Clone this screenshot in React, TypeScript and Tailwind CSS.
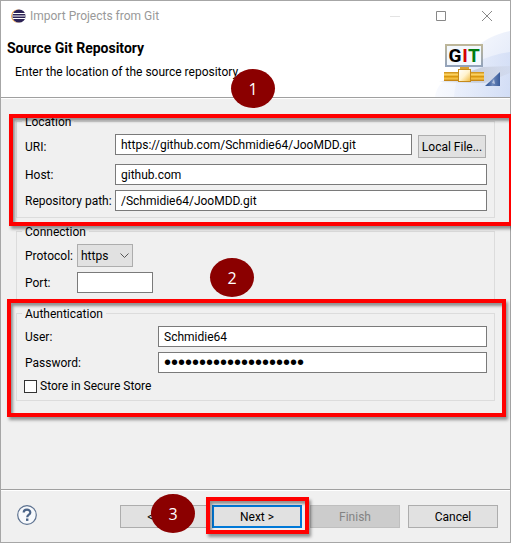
import type { ReactNode } from "react";

const field =
  "h-[21px] min-w-0 rounded-none border border-[#7a7a7a] bg-white px-[5px] leading-4 text-black outline-none";

function Group({ title, children }: { title: string; children: ReactNode }) {
  return (
    <fieldset className="min-w-0 border border-[#dcdcdc] pr-[7px] pb-[6px] pl-2">
      <legend className="-ml-[3px] px-[3px] pt-[2px] text-xs leading-4">{title}</legend>
      <div className="pt-1">{children}</div>
    </fieldset>
  );
}

function Marker({ n, place }: { n: number; place: string }) {
  return (
    <div
      className={`absolute flex h-[39px] w-[44px] items-center justify-center rounded-[50%] bg-[#8b0000] font-['Open_Sans',sans-serif] text-base text-white ${place}`}
    >
      {n}
    </div>
  );
}

function Highlight({ place }: { place: string }) {
  return (
    <div
      className={`pointer-events-none absolute border-4 border-[#ff0000] shadow-[2px_3px_3px_rgba(0,0,0,0.4),inset_2px_3px_3px_rgba(0,0,0,0.4)] ${place}`}
    />
  );
}

function EclipseLogo() {
  return (
    <svg width="15" height="14" viewBox="0 0 15 14" aria-hidden="true">
      <circle cx="6.8" cy="7" r="6.6" fill="#f7941e" />
      <circle cx="7.6" cy="7" r="6.6" fill="#fff" />
      <circle cx="8" cy="7" r="6.6" fill="#2c2255" />
      <path d="M2 4.500h12M1.500 7h13M2 9.500h12" stroke="#fff" strokeWidth="1" />
    </svg>
  );
}

function GitBanner() {
  return (
    <svg className="block" width="75" height="66" viewBox="0 0 75 66" role="img" aria-label="GIT">
      <defs>
        <linearGradient id="sky" x1="0" y1="0" x2="1" y2="1">
          <stop offset="0" stopColor="#fbfcff" />
          <stop offset="1" stopColor="#c9d6f3" />
        </linearGradient>
        <linearGradient id="sky2" x1="0" y1="0" x2="1" y2="0">
          <stop offset="0" stopColor="#f4f7fe" />
          <stop offset="1" stopColor="#cbd8f4" />
        </linearGradient>
        <linearGradient id="pipe" x1="0" y1="0" x2="0" y2="1">
          <stop offset="0" stopColor="#c98a12" />
          <stop offset="0.3" stopColor="#ffd766" />
          <stop offset="0.5" stopColor="#d9970f" />
          <stop offset="0.75" stopColor="#f7c447" />
          <stop offset="1" stopColor="#b87508" />
        </linearGradient>
        <linearGradient id="box" x1="0" y1="0" x2="1" y2="1">
          <stop offset="0" stopColor="#ffffff" />
          <stop offset="0.5" stopColor="#fff3cf" />
          <stop offset="1" stopColor="#f0b93a" />
        </linearGradient>
        <linearGradient id="frame" x1="0" y1="0" x2="0" y2="1">
          <stop offset="0" stopColor="#bdb698" />
          <stop offset="1" stopColor="#93a3bb" />
        </linearGradient>
        <linearGradient id="corner" x1="0" y1="0" x2="1" y2="0">
          <stop offset="0.2" stopColor="#3c5f9c" />
          <stop offset="0.5" stopColor="#6f8abc" />
          <stop offset="1" stopColor="#3a5c9b" />
        </linearGradient>
        <linearGradient id="shade" x1="0" y1="0" x2="1" y2="0">
          <stop offset="0" stopColor="#b5bac6" stopOpacity="0.2" />
          <stop offset="0.5" stopColor="#b5bac6" stopOpacity="0.6" />
          <stop offset="1" stopColor="#c8cedd" stopOpacity="0.3" />
        </linearGradient>
      </defs>
      <path d="M75 0C45 6 22 26 19 66H75Z" fill="url(#sky)" opacity="0.65" />
      <path d="M0 66C1 58 5 52 12 48 28 37 50 24 75 21V66Z" fill="url(#sky2)" opacity="0.6" />
      <path d="M4 51L48 36 75 35V42L50 52Z" fill="url(#shade)" />
      <rect x="11" y="14" width="36" height="21" fill="#f3f8fd" stroke="url(#frame)" strokeWidth="2" />
      <g fontFamily="'Liberation Sans Narrow', Roboto, sans-serif" fontWeight="700" fontSize="19" textAnchor="middle">
        <text x="20" y="31" fill="#000">G</text>
        <text x="30" y="31" fill="#d40000">I</text>
        <text x="39" y="31" fill="#007a10">T</text>
      </g>
      <rect x="25" y="36" width="9" height="4" fill="#d9a132" />
      <rect x="9" y="41" width="40" height="9" fill="url(#pipe)" />
      <rect x="23.500" y="38.500" width="12" height="12" fill="url(#box)" stroke="#c58a1c" />
      <path d="M65 41V55H50Z" fill="url(#corner)" />
      <path d="M57 52L59 48L60 53Z" fill="#c9d5ea" opacity="0.8" />
    </svg>
  );
}

export default function App() {
  return (
    <main className="relative overflow-hidden font-[Roboto,sans-serif] text-xs leading-4 text-black">
      <div className="flex min-h-screen flex-col border border-[#a6a6a6] bg-[#f0f0f0]">
        <header className="border-b border-[#a0a0a0] bg-white">
          <div className="flex h-[30px] items-center pl-[10px] text-[#999]">
            <EclipseLogo />
            <span className="ml-1 flex-1">Import Projects from Git</span>
            <button aria-label="Minimize" className="flex h-7 w-[46px] items-center justify-center">
              <svg width="10" height="10"><path d="M0 5.500H10" stroke="#e3e3e3" /></svg>
            </button>
            <button aria-label="Maximize" className="flex h-7 w-[46px] items-center justify-center">
              <svg width="10" height="10"><path d="M.5.5H9.500V9.500H.5Z" fill="none" stroke="#888" /></svg>
            </button>
            <button aria-label="Close" className="flex h-7 w-[46px] items-center justify-center">
              <svg width="10" height="10"><path d="M0 0L10 10M10 0L0 10" stroke="#888" /></svg>
            </button>
          </div>
          <div className="flex h-[66px] justify-between">
            <div className="pt-[9px] pl-[6px]">
              <h1 className="text-sm leading-4 font-bold">Source Git Repository</h1>
              <p className="mt-2 pl-2">Enter the location of the source repository.</p>
            </div>
            <GitBanner />
          </div>
        </header>

        <form className="flex flex-1 flex-col border-t border-white" onSubmit={(e) => e.preventDefault()}>
          <div className="flex flex-1 flex-col gap-1 px-[15px] pt-[13px]">
            <Group title="Location">
              <div className="grid grid-cols-[90px_1fr] items-center">
                <label htmlFor="uri" className="pt-[2px]">URI:</label>
                <div className="flex gap-[6px] pr-px">
                  <input id="uri" className={`${field} flex-1`} defaultValue="https://github.com/Schmidie64/JooMDD.git" />
                  <button type="button" className="mt-px h-[23px] w-[68px] border border-[#adadad] bg-[#e1e1e1] whitespace-nowrap">
                    Local File...
                  </button>
                </div>
                <label htmlFor="host" className="pt-[6px]">Host:</label>
                <input id="host" className={`${field} mt-[6px]`} defaultValue="github.com" />
                <label htmlFor="path" className="pt-[6px] whitespace-nowrap">Repository path:</label>
                <input id="path" className={`${field} mt-[5px]`} defaultValue="/Schmidie64/JooMDD.git" />
              </div>
            </Group>

            <Group title="Connection">
              <div className="grid grid-cols-[52px_1fr] items-center gap-y-[5px]">
                <label htmlFor="protocol">Protocol:</label>
                <div className="relative w-[56px]">
                  <select
                    id="protocol"
                    className="block h-[23px] w-full appearance-none rounded-none border border-[#adadad] bg-[#e1e1e1] pl-[3px] text-xs"
                  >
                    <option>https</option>
                  </select>
                  <svg className="pointer-events-none absolute top-[9px] right-1" width="9" height="6">
                    <path d="M.5.5L4.500 4.500L8.500.5" fill="none" stroke="#555" />
                  </svg>
                </div>
                <label htmlFor="port">Port:</label>
                <input id="port" className={`${field} w-[76px]`} />
              </div>
            </Group>

            <Group title="Authentication">
              <div className="grid grid-cols-[133px_1fr] items-center gap-y-[5px]">
                <label htmlFor="user">User:</label>
                <input id="user" className={field} defaultValue="Schmidie64" />
                <label htmlFor="password">Password:</label>
                <input
                  id="password"
                  type="password"
                  className={`${field} font-['Liberation_Sans',sans-serif] text-xl`}
                  defaultValue="abcdefghijklmnopqrst"
                />
              </div>
              <div className="-ml-px flex items-center gap-[3px] pt-[5px]">
                <input
                  id="store"
                  type="checkbox"
                  className="size-[13px] appearance-none border border-[#333] bg-white checked:bg-[#333]"
                />
                <label htmlFor="store">Store in Secure Store</label>
              </div>
            </Group>
          </div>

          <footer className="border-t border-[#a0a0a0]">
            <div className="flex border-t border-white pt-[14px] pr-3 pb-[14px] pl-4">
              <button type="button" aria-label="Help" className="size-5">
                <svg width="20" height="20" viewBox="0 0 20 20">
                  <circle cx="10" cy="10" r="9.300" fill="#f7f9fc" stroke="#5d7290" strokeWidth="1.200" />
                  <path d="M6.700 7.600C6.700 3.700 13.300 3.800 13.300 7.400 13.300 9.800 10.200 9.600 10.200 12.300" fill="none" stroke="#4b6488" strokeWidth="2.200" />
                  <rect x="9" y="13.500" width="2.400" height="2.400" fill="#4b6488" />
                </svg>
              </button>
              <div className="ml-auto flex">
                <button type="button" className="h-[23px] w-[90px] border border-[#adadad] bg-[#e1e1e1]">
                  &lt; Back
                </button>
                <button type="submit" className="ml-[2px] h-[23px] w-[90px] border-2 border-[#0078d7] bg-[#e1e1e1]">
                  Next &gt;
                </button>
                <button type="button" disabled className="ml-2 h-[23px] w-[90px] border border-[#bfbfbf] bg-[#cccccc] text-[#838383]">
                  Finish
                </button>
                <button type="button" className="ml-2 h-[23px] w-[90px] border border-[#adadad] bg-[#e1e1e1]">
                  Cancel
                </button>
              </div>
            </div>
          </footer>
        </form>
      </div>

      <Highlight place="top-[114px] -right-[2px] left-[9px] h-[112px]" />
      <Highlight place="top-[299px] right-[5px] left-[7px] h-[118px]" />
      <Highlight place="right-[202px] bottom-[9px] h-[37px] w-[103px]" />
      <Marker n={1} place="top-[69px] left-[231px]" />
      <Marker n={2} place="top-[258px] left-[210px]" />
      <Marker n={3} place="right-[316px] bottom-[10px]" />
    </main>
  );
}
